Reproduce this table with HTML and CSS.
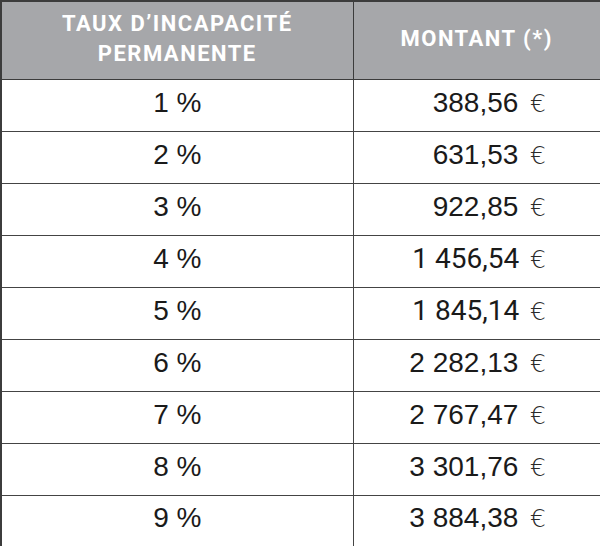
FILE: index.html
```html
<!DOCTYPE html>
<html lang="fr">
<head>
<meta charset="utf-8">
<title>Taux d'incapacité permanente</title>
<link rel="stylesheet" href="styles.css">
</head>
<body>
<table class="rates">
  <colgroup><col class="col-rate"><col class="col-amount"></colgroup>
  <thead>
    <tr class="head-row">
      <th class="head-cell">TAUX D’INCAPACITÉ<br>PERMANENTE</th>
      <th class="head-cell">MONTANT (*)</th>
    </tr>
  </thead>
  <tbody>
    <tr class="row"><td class="rate">1 %</td><td class="amount">388,56 <span class="eur">€</span></td></tr>
    <tr class="row"><td class="rate">2 %</td><td class="amount">631,53 <span class="eur">€</span></td></tr>
    <tr class="row"><td class="rate">3 %</td><td class="amount">922,85 <span class="eur">€</span></td></tr>
    <tr class="row"><td class="rate">4 %</td><td class="amount alt">1 456,54 <span class="eur">€</span></td></tr>
    <tr class="row"><td class="rate">5 %</td><td class="amount alt">1 845,14 <span class="eur">€</span></td></tr>
    <tr class="row"><td class="rate">6 %</td><td class="amount">2 282,13 <span class="eur">€</span></td></tr>
    <tr class="row"><td class="rate">7 %</td><td class="amount">2 767,47 <span class="eur">€</span></td></tr>
    <tr class="row"><td class="rate">8 %</td><td class="amount">3 301,76 <span class="eur">€</span></td></tr>
    <tr class="row"><td class="rate">9 %</td><td class="amount">3 884,38 <span class="eur">€</span></td></tr>
  </tbody>
</table>
</body>
</html>
```

FILE: styles.css
```css
html, body {
  margin: 0;
  padding: 0;
  background: #ffffff;
}

.rates {
  width: 600px;
  height: 546px;
  border-collapse: collapse;
  table-layout: fixed;
  border: 2px solid #3c3c3c;
  font-family: "Liberation Sans", Arial, sans-serif;
  color: #1a1a1a;
}

.col-rate { width: 352px; }
.col-amount { width: 248px; }

.head-row {
  height: 78px;
  background: #a6a7aa;
}

.head-cell {
  padding: 0 0 2px;
  font-family: Roboto, "Liberation Sans", sans-serif;
  font-weight: 700;
  font-size: 22px;
  line-height: 30px;
  letter-spacing: 1.5px;
  color: #ffffff;
  text-align: center;
  vertical-align: middle;
  border: 1px solid #3c3c3c;
}

.row {
  height: 52px;
}

.rate,
.amount {
  border: 1px solid #444444;
  font-size: 28px;
  padding: 0 0 5px;
  vertical-align: middle;
  white-space: nowrap;
}

.rate {
  text-align: center;
}

.amount {
  text-align: right;
  padding-right: 54px;
}

.amount.alt {
  font-family: Roboto, "Liberation Sans", sans-serif;
}

.eur {
  font-family: "DejaVu Sans", sans-serif;
  font-weight: 200;
  font-size: 25px;
  margin-left: 4px;
  color: #2a2a2a;
}
```
